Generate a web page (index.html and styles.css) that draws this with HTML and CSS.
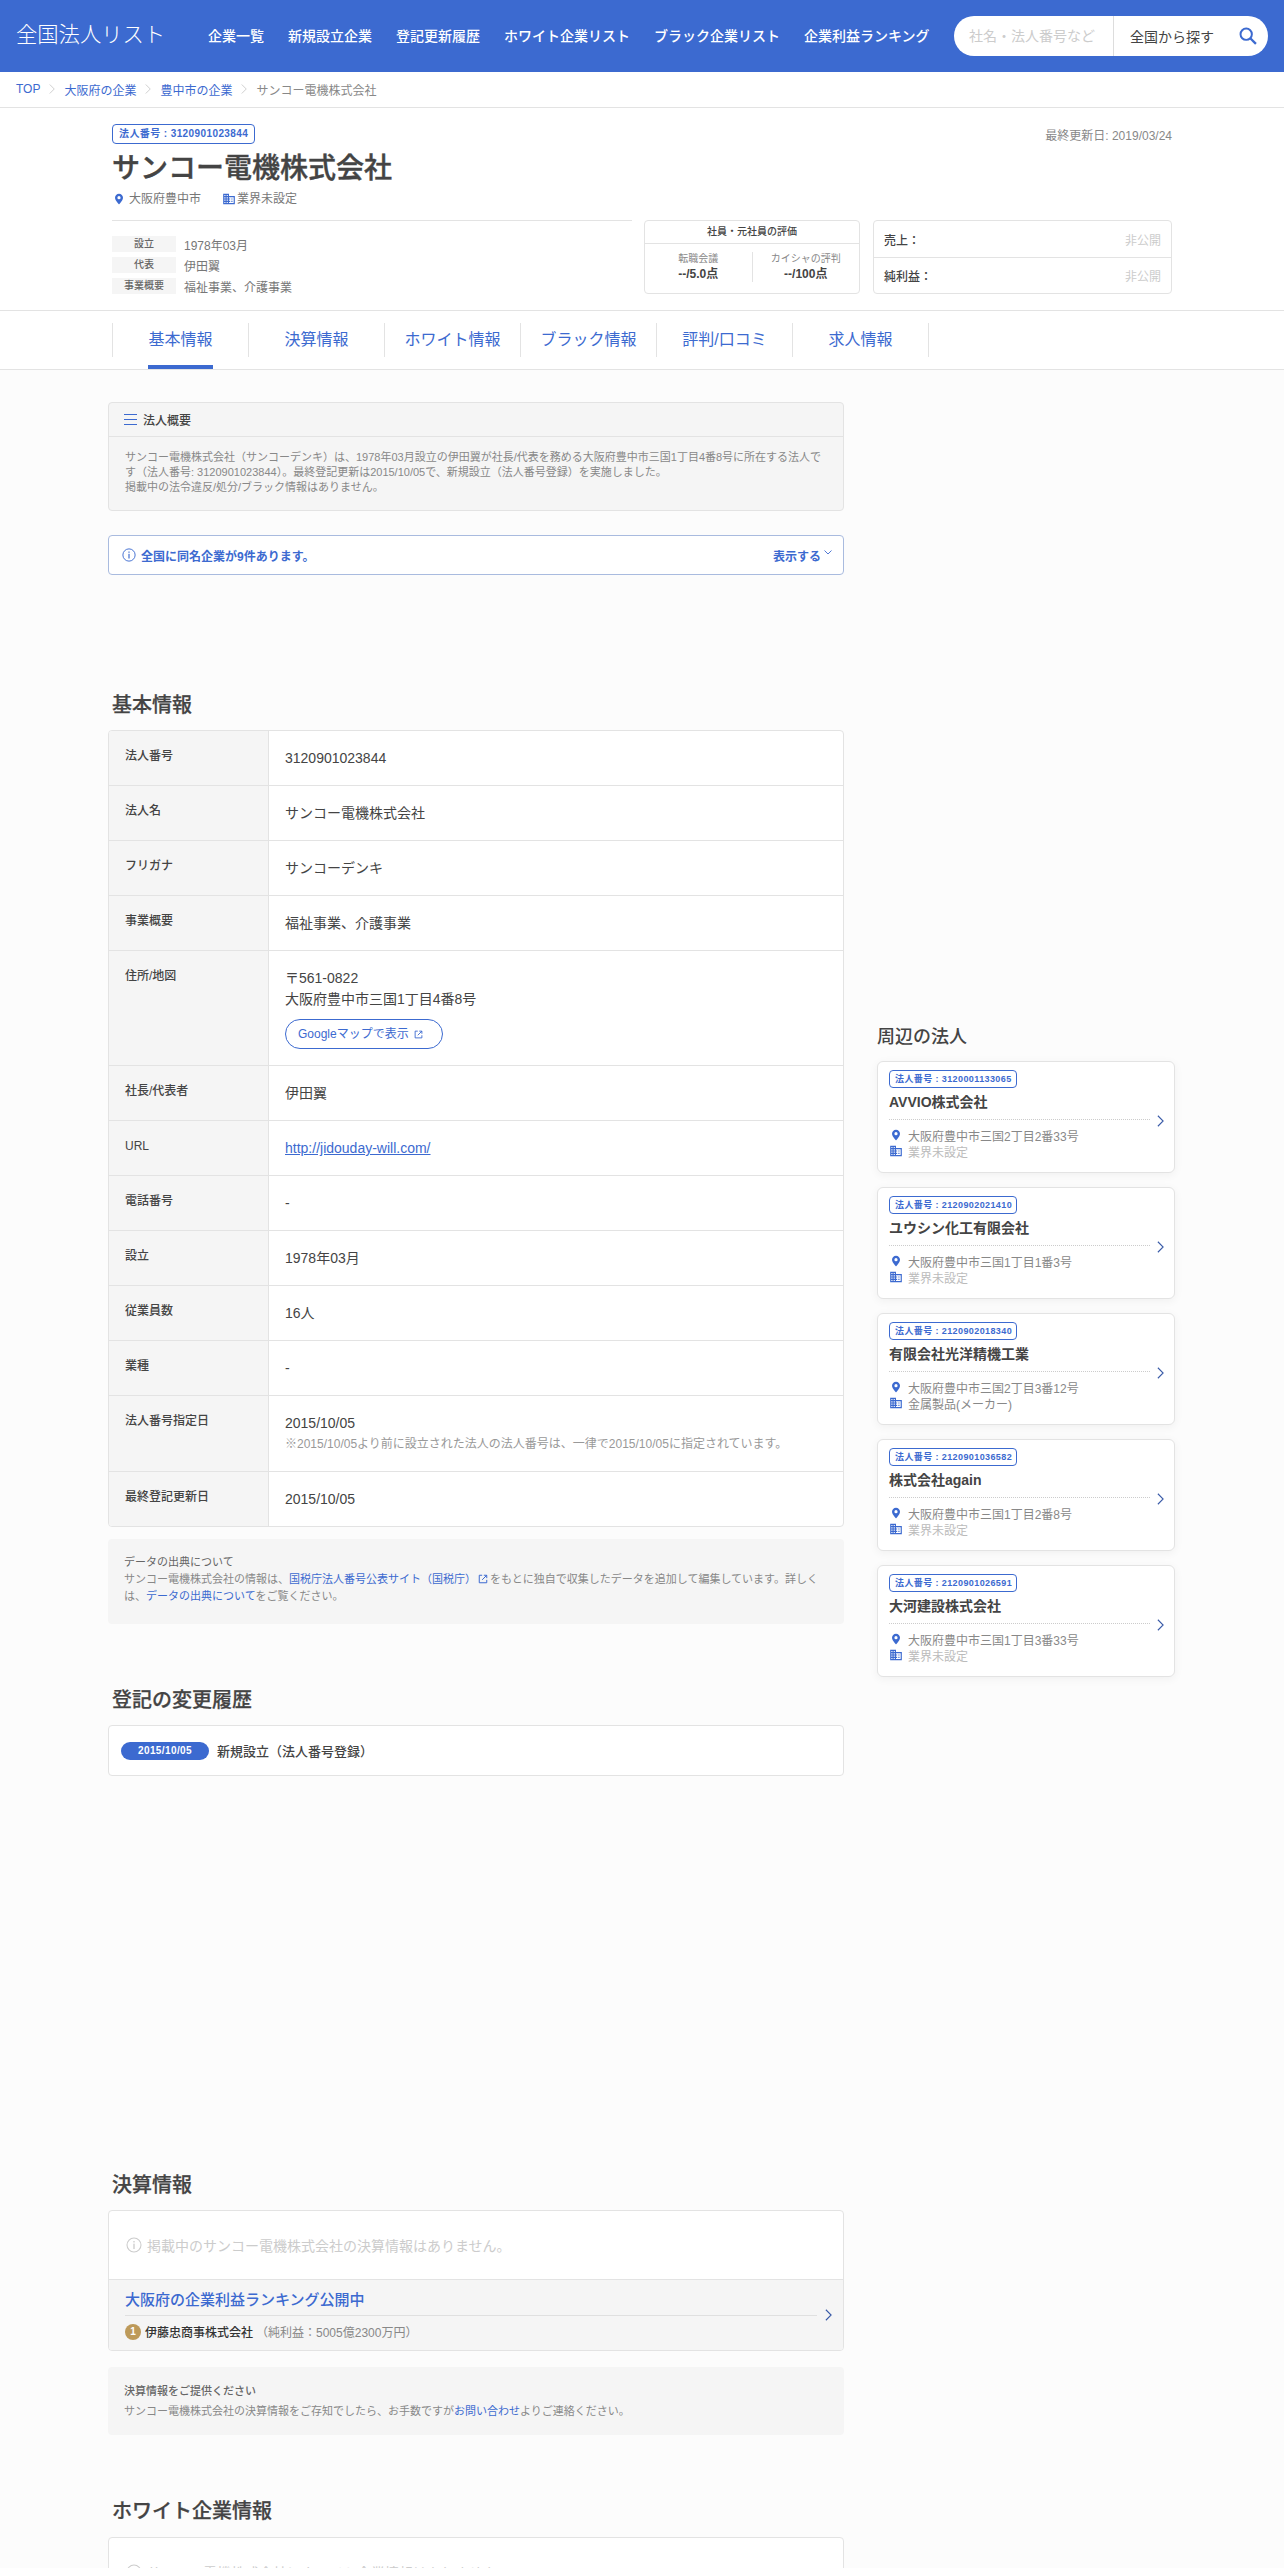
FILE: index.html
```html
<!DOCTYPE html>
<html lang="ja">
<head>
<meta charset="utf-8">
<title>サンコー電機株式会社 | 全国法人リスト</title>
<link rel="stylesheet" href="styles.css">
</head>
<body>
<svg class="sprite" aria-hidden="true">
  <symbol id="i-pin" viewBox="0 0 24 24"><path fill-rule="evenodd" d="M12 1.5c-4.4 0-8 3.5-8 7.9C4 15.200 12 22.500 12 22.500s8-7.300 8-13.100c0-4.400-3.600-7.900-8-7.900zm0 11a3.200 3.200 0 1 1 0-6.400 3.200 3.200 0 0 1 0 6.400z"/></symbol>
  <symbol id="i-building" viewBox="0 0 24 24"><path d="M12 7V3H2v18h20V7H12zM6 19H4v-2h2v2zm0-4H4v-2h2v2zm0-4H4V9h2v2zm0-4H4V5h2v2zm4 12H8v-2h2v2zm0-4H8v-2h2v2zm0-4H8V9h2v2zm0-4H8V5h2v2zm10 12h-8v-2h2v-2h-2v-2h2v-2h-2V9h8v10zm-2-8h-2v2h2v-2zm0 4h-2v2h2v-2z"/></symbol>
  <symbol id="i-info" viewBox="0 0 24 24"><circle cx="12" cy="12" r="10.500" fill="none" stroke="currentColor" stroke-width="1.600"/><rect x="11" y="10" width="2" height="8" fill="currentColor"/><rect x="11" y="6" width="2" height="2.200" fill="currentColor"/></symbol>
  <symbol id="i-ext" viewBox="0 0 24 24"><path fill="none" stroke="currentColor" stroke-width="2.400" d="M10 3H3v18h18v-7M14 3h7v7M21 3 10 14"/></symbol>
  <symbol id="i-chev" viewBox="0 0 8 14"><path fill="none" stroke="currentColor" stroke-width="1.250" d="m1 1 6 6-6 6"/></symbol>
</svg>
<div class="page">
<header class="site-header">
  <a class="logo">全国法人リスト</a>
  <nav class="global-nav">
    <a>企業一覧</a><a>新規設立企業</a><a>登記更新履歴</a><a>ホワイト企業リスト</a><a>ブラック企業リスト</a><a>企業利益ランキング</a>
  </nav>
  <form class="search">
    <span class="search-input">社名・法人番号など</span>
    <span class="search-area">全国から探す</span>
    <svg class="search-icon" viewBox="0 0 20 20"><circle cx="8" cy="8" r="6.300" fill="none" stroke="currentColor" stroke-width="2.200"/><path d="m12.800 12.800 6 6" stroke="currentColor" stroke-width="2.600" fill="none"/></svg>
  </form>
</header>

<nav class="crumbs">
  <a>TOP</a><svg class="crumb-sep"><use href="#i-chev"/></svg>
  <a>大阪府の企業</a><svg class="crumb-sep"><use href="#i-chev"/></svg>
  <a>豊中市の企業</a><svg class="crumb-sep"><use href="#i-chev"/></svg>
  <span>サンコー電機株式会社</span>
</nav>

<section class="company">
  <div class="company-top">
    <span class="badge">法人番号 : 3120901023844</span>
    <span class="updated">最終更新日: 2019/03/24</span>
  </div>
  <h1 class="company-name">サンコー電機株式会社</h1>
  <div class="company-meta">
    <span class="meta-item"><svg class="icon-pin"><use href="#i-pin"/></svg>大阪府豊中市</span>
    <span class="meta-item"><svg class="icon-bld"><use href="#i-building"/></svg>業界未設定</span>
  </div>
  <div class="summary">
    <dl class="facts">
      <div class="fact"><dt>設立</dt><dd>1978年03月</dd></div>
      <div class="fact"><dt>代表</dt><dd>伊田翼</dd></div>
      <div class="fact"><dt>事業概要</dt><dd>福祉事業、介護事業</dd></div>
    </dl>
    <div class="rating">
      <div class="rating-head">社員・元社員の評価</div>
      <div class="rating-cols">
        <div class="rating-col"><span class="rating-label">転職会議</span><strong>--/5.0点</strong></div>
        <div class="rating-col"><span class="rating-label">カイシャの評判</span><strong>--/100点</strong></div>
      </div>
    </div>
    <div class="finance">
      <div class="finance-row"><b>売上：</b><span>非公開</span></div>
      <div class="finance-row"><b>純利益：</b><span>非公開</span></div>
    </div>
  </div>
</section>

<nav class="tabs">
  <a class="tab is-active"><span>基本情報</span></a>
  <a class="tab"><span>決算情報</span></a>
  <a class="tab"><span>ホワイト情報</span></a>
  <a class="tab"><span>ブラック情報</span></a>
  <a class="tab"><span>評判/口コミ</span></a>
  <a class="tab"><span>求人情報</span></a>
</nav>

<div class="layout">
  <main class="main">
    <section class="overview">
      <h2 class="overview-head"><svg class="icon-lines" viewBox="0 0 13 11"><path d="M0 .5h13M0 5.500h13M0 10.500h13" stroke="currentColor" fill="none"/></svg>法人概要</h2>
      <p class="overview-body">サンコー電機株式会社（サンコーデンキ）は、1978年03月設立の伊田翼が社長/代表を務める大阪府豊中市三国1丁目4番8号に所在する法人です（法人番号: 3120901023844）。最終登記更新は2015/10/05で、新規設立（法人番号登録）を実施しました。<br>掲載中の法令違反/処分/ブラック情報はありません。</p>
    </section>

    <div class="alert">
      <svg class="icon-info"><use href="#i-info"/></svg>
      <b>全国に同名企業が9件あります。</b>
      <a class="alert-more">表示する<svg class="icon-down" viewBox="0 0 8 5"><path d="m.5.500 3.500 3.500L7.500.500" fill="none" stroke="currentColor" stroke-width=".9"/></svg></a>
    </div>

    <h2 class="section-title title-basic">基本情報</h2>
    <div class="table">
      <div class="row"><div class="row-label">法人番号</div><div class="row-value">3120901023844</div></div>
      <div class="row"><div class="row-label">法人名</div><div class="row-value">サンコー電機株式会社</div></div>
      <div class="row"><div class="row-label">フリガナ</div><div class="row-value">サンコーデンキ</div></div>
      <div class="row"><div class="row-label">事業概要</div><div class="row-value">福祉事業、介護事業</div></div>
      <div class="row"><div class="row-label">住所/地図</div><div class="row-value">〒561-0822<br>大阪府豊中市三国1丁目4番8号<br><a class="map-btn">Googleマップで表示<svg class="icon-ext"><use href="#i-ext"/></svg></a></div></div>
      <div class="row"><div class="row-label">社長/代表者</div><div class="row-value">伊田翼</div></div>
      <div class="row"><div class="row-label">URL</div><div class="row-value"><a class="link-u">http://jidouday-will.com/</a></div></div>
      <div class="row"><div class="row-label">電話番号</div><div class="row-value">-</div></div>
      <div class="row"><div class="row-label">設立</div><div class="row-value">1978年03月</div></div>
      <div class="row"><div class="row-label">従業員数</div><div class="row-value">16人</div></div>
      <div class="row"><div class="row-label">業種</div><div class="row-value">-</div></div>
      <div class="row"><div class="row-label">法人番号指定日</div><div class="row-value">2015/10/05<div class="row-note">※2015/10/05より前に設立された法人の法人番号は、一律で2015/10/05に指定されています。</div></div></div>
      <div class="row"><div class="row-label">最終登記更新日</div><div class="row-value">2015/10/05</div></div>
    </div>

    <aside class="note note-source">
      <h3>データの出典について</h3>
      <p>サンコー電機株式会社の情報は、<a>国税庁法人番号公表サイト（国税庁）<svg class="icon-ext-s"><use href="#i-ext"/></svg></a>をもとに独自で収集したデータを追加して編集しています。詳しくは、<a>データの出典について</a>をご覧ください。</p>
    </aside>

    <h2 class="section-title title-history">登記の変更履歴</h2>
    <div class="history">
      <span class="pill">2015/10/05</span><b>新規設立（法人番号登録）</b>
    </div>

    <h2 class="section-title title-finance">決算情報</h2>
    <div class="panel">
      <p class="empty"><svg class="icon-empty"><use href="#i-info"/></svg>掲載中のサンコー電機株式会社の決算情報はありません。</p>
      <a class="ranking">
        <div class="ranking-body">
          <div class="ranking-title">大阪府の企業利益ランキング公開中</div>
          <div class="ranking-item"><span class="medal">1</span><b>伊藤忠商事株式会社</b><span class="ranking-value">（純利益：5005億2300万円）</span></div>
        </div>
        <svg class="chev-lg"><use href="#i-chev"/></svg>
      </a>
    </div>
    <aside class="note note-provide">
      <h3>決算情報をご提供ください</h3>
      <p>サンコー電機株式会社の決算情報をご存知でしたら、お手数ですが<a>お問い合わせ</a>よりご連絡ください。</p>
    </aside>

    <h2 class="section-title title-white">ホワイト企業情報</h2>
    <div class="panel">
      <p class="empty"><svg class="icon-empty"><use href="#i-info"/></svg>サンコー電機株式会社にホワイト企業情報はありません。</p>
    </div>
  </main>

  <aside class="side">
    <h2 class="side-title">周辺の法人</h2>
    <a class="near">
      <div class="near-body">
        <span class="badge badge-sm">法人番号 : 3120001133065</span>
        <div class="near-name">AVVIO株式会社</div>
        <div class="near-line"><svg class="near-pin"><use href="#i-pin"/></svg>大阪府豊中市三国2丁目2番33号</div>
        <div class="near-line is-muted"><svg class="near-bld"><use href="#i-building"/></svg>業界未設定</div>
      </div>
      <svg class="chev-lg"><use href="#i-chev"/></svg>
    </a>
    <a class="near">
      <div class="near-body">
        <span class="badge badge-sm">法人番号 : 2120902021410</span>
        <div class="near-name">ユウシン化工有限会社</div>
        <div class="near-line"><svg class="near-pin"><use href="#i-pin"/></svg>大阪府豊中市三国1丁目1番3号</div>
        <div class="near-line is-muted"><svg class="near-bld"><use href="#i-building"/></svg>業界未設定</div>
      </div>
      <svg class="chev-lg"><use href="#i-chev"/></svg>
    </a>
    <a class="near">
      <div class="near-body">
        <span class="badge badge-sm">法人番号 : 2120902018340</span>
        <div class="near-name">有限会社光洋精機工業</div>
        <div class="near-line"><svg class="near-pin"><use href="#i-pin"/></svg>大阪府豊中市三国2丁目3番12号</div>
        <div class="near-line"><svg class="near-bld"><use href="#i-building"/></svg>金属製品(メーカー)</div>
      </div>
      <svg class="chev-lg"><use href="#i-chev"/></svg>
    </a>
    <a class="near">
      <div class="near-body">
        <span class="badge badge-sm">法人番号 : 2120901036582</span>
        <div class="near-name">株式会社again</div>
        <div class="near-line"><svg class="near-pin"><use href="#i-pin"/></svg>大阪府豊中市三国1丁目2番8号</div>
        <div class="near-line is-muted"><svg class="near-bld"><use href="#i-building"/></svg>業界未設定</div>
      </div>
      <svg class="chev-lg"><use href="#i-chev"/></svg>
    </a>
    <a class="near">
      <div class="near-body">
        <span class="badge badge-sm">法人番号 : 2120901026591</span>
        <div class="near-name">大河建設株式会社</div>
        <div class="near-line"><svg class="near-pin"><use href="#i-pin"/></svg>大阪府豊中市三国1丁目3番33号</div>
        <div class="near-line is-muted"><svg class="near-bld"><use href="#i-building"/></svg>業界未設定</div>
      </div>
      <svg class="chev-lg"><use href="#i-chev"/></svg>
    </a>
  </aside>
</div>
</div>
</body>
</html>
```

FILE: styles.css
```css
* { box-sizing: border-box; }
html, body { margin: 0; padding: 0; }
body {
  font-family: "Liberation Sans", "Noto Sans CJK JP", sans-serif;
  color: #444;
  background: #fcfcfc;
  font-size: 14px;
}
a { color: inherit; text-decoration: none; }
h1, h2, h3, p, dl, dd { margin: 0; }
svg { display: block; fill: currentColor; flex: none; }
.sprite { position: absolute; width: 0; height: 0; }
.page { height: 2568px; overflow: hidden; }

/* header */
.site-header {
  display: flex;
  align-items: center;
  height: 72px;
  padding: 0 16px;
  background: #3c6ad0;
  color: #fff;
}
.logo { width: 192px; font-size: 21.300px; font-weight: 300; line-height: 32px; white-space: nowrap; margin-top: -2px; }
.global-nav { display: flex; gap: 24px; font-size: 14px; font-weight: 500; margin-top: -2px; }
.search {
  display: flex;
  align-items: center;
  width: 314px;
  height: 40px;
  margin-left: auto;
  border-radius: 20px;
  background: #fff;
}
.search-input { width: 160px; padding-left: 15px; border-right: 1px solid #ddd; line-height: 40px; color: #ccc; white-space: nowrap; }
.search-area { padding-left: 16px; width: 125px; color: #444; white-space: nowrap; }
.search-icon { width: 18px; height: 18px; color: #3c6ad0; }

/* breadcrumbs */
.crumbs {
  display: flex;
  align-items: center;
  height: 36px;
  padding: 0 16px 1px;
  background: #fff;
  border-bottom: 1px solid #e3e3e3;
  font-size: 12px;
  color: #3c6ad0;
}
.crumbs span { color: #888; }
.crumb-sep { width: 6px; height: 12px; margin: 0 9px; color: #ccc; }

/* company head */
.company {
  padding: 16px 112px 16px;
  background: #fff;
  border-bottom: 1px solid #e3e3e3;
}
.company-top { display: flex; justify-content: space-between; align-items: center; }
.badge {
  display: inline-block;
  height: 20px;
  padding: 0 6px;
  border: 1px solid #3c6ad0;
  border-radius: 4px;
  background: #fff;
  color: #3c6ad0;
  font-size: 10px;
  font-weight: 700;
  letter-spacing: .4px;
  line-height: 18px;
  white-space: nowrap;
}
.updated { font-size: 12px; color: #888; }
.company-name { margin-top: 7px; font-size: 28px; line-height: 36px; font-weight: 500; -webkit-text-stroke: .4px #444; color: #444; }
.company-meta { display: flex; gap: 21px; margin-top: 4px; font-size: 12px; line-height: 16px; color: #777; }
.meta-item { display: flex; align-items: center; }
.icon-pin { width: 12px; height: 12px; margin-right: 4px; margin-left: 1px; color: #3c6ad0; }
.icon-bld { width: 14px; height: 14px; margin-right: 1px; color: #3c6ad0; }
.summary { display: flex; margin-top: 13px; }
.facts { width: 520px; margin-right: 12px; padding-top: 15px; border-top: 1px solid #e3e3e3; font-size: 12px; }
.fact { display: flex; align-items: center; height: 16px; margin-bottom: 5px; }
.fact:last-child { margin-bottom: 0; }
.fact dt { width: 64px; margin-right: 8px; background: #f5f5f5; font-size: 10px; font-weight: 500; line-height: 16px; text-align: center; color: #666; }
.fact dd { color: #777; }
.rating {
  width: 216px;
  height: 74px;
  margin-right: 13px;
  border: 1px solid #e3e3e3;
  border-radius: 4px;
  background: #fff;
}
.rating-head { height: 23px; border-bottom: 1px solid #e3e3e3; font-size: 10px; font-weight: 500; line-height: 21px; text-align: center; color: #444; }
.rating-cols { display: flex; padding-top: 8px; }
.rating-col { display: flex; flex-direction: column; flex: 1; align-items: center; height: 30px; }
.rating-col + .rating-col { border-left: 1px solid #e3e3e3; }
.rating-label { font-size: 10px; line-height: 14px; color: #888; }
.rating-col strong { font-size: 12px; line-height: 17px; color: #444; }
.finance { width: 299px; height: 74px; border: 1px solid #e3e3e3; border-radius: 4px; background: #fff; }
.finance-row { display: flex; justify-content: space-between; align-items: center; height: 36px; padding: 0 10px; font-size: 12px; }
.finance-row b { font-weight: 500; }
.finance-row + .finance-row { border-top: 1px solid #e3e3e3; }
.finance-row span { color: #ccc; }

/* tabs */
.tabs {
  display: flex;
  padding: 12px 112px;
  background: #fff;
  border-bottom: 1px solid #e3e3e3;
}
.tab {
  width: 136px;
  height: 34px;
  border-left: 1px solid #e3e3e3;
  font-size: 16px;
  line-height: 34px;
  text-align: center;
  color: #3c6ad0;
}
.tab:last-child { width: 137px; border-right: 1px solid #e3e3e3; }
.tab span { position: relative; display: inline-block; }
.is-active span::after {
  content: "";
  position: absolute;
  left: 0;
  right: 0;
  top: 42px;
  height: 4px;
  background: #3c6ad0;
}

/* layout */
.layout { display: flex; gap: 33px; padding: 32px 0 0 108px; }
.main { width: 736px; flex: none; }
.side { width: 298px; flex: none; padding-top: 622px; }

.overview { border: 1px solid #e3e3e3; border-radius: 4px; background: #f5f5f5; }
.overview-head {
  display: flex;
  align-items: center;
  height: 34px;
  padding-left: 15px;
  border-bottom: 1px solid #e3e3e3;
  font-size: 12px;
  font-weight: 500;
  color: #444;
}
.icon-lines { width: 13px; height: 11px; margin-right: 6px; color: #3c6ad0; }
.overview-body { padding: 13px 16px 15px; font-size: 11px; line-height: 15px; color: #888; }

.alert {
  display: flex;
  align-items: center;
  height: 40px;
  margin-top: 24px;
  padding: 0 11px 0 13px;
  border: 1px solid #a9bbdf;
  border-radius: 4px;
  background: #fff;
  font-size: 12px;
  color: #3c6ad0;
}
.icon-info { width: 14px; height: 14px; margin-right: 5px; }
.alert-more { display: flex; margin-left: auto; font-weight: 700; }
.icon-down { width: 8px; height: 5px; margin: 3px 0 0 3px; }

.section-title { font-size: 20px; line-height: 30px; font-weight: 500; -webkit-text-stroke: .25px #444; padding-left: 4px; margin-bottom: 10px; color: #444; }
.title-basic { margin-top: 115px; }
.title-history { margin-top: 61px; }
.title-finance { margin-top: 394px; }
.title-white { margin-top: 61px; margin-bottom: 11px; }

.table { border: 1px solid #e3e3e3; border-radius: 4px; background: #fff; overflow: hidden; }
.row { display: flex; border-bottom: 1px solid #e3e3e3; }
.row:last-child { border-bottom: 0; }
.row-label {
  width: 160px;
  flex: none;
  padding: 16px;
  border-right: 1px solid #e3e3e3;
  background: #f5f5f5;
  font-size: 12px;
  font-weight: 500;
  line-height: 18px;
  color: #444;
}
.row-value { flex: 1; padding: 17px 16px 16px; font-size: 14px; line-height: 21px; color: #444; }
.row-note { font-size: 12px; color: #999; }
.map-btn {
  display: flex;
  align-items: center;
  width: 158px;
  height: 30px;
  margin-top: 9px;
  padding-left: 12px;
  border: 1px solid #3c6ad0;
  border-radius: 15px;
  font-size: 12px;
  color: #3c6ad0;
}
.icon-ext { width: 9px; height: 9px; margin-left: 5px; }
.link-u { color: #3c6ad0; text-decoration: underline; }

.note { border-radius: 4px; background: #f5f5f5; font-size: 11px; color: #888; }
.note h3 { font-size: 11px; font-weight: 400; color: #666; }
.note a { color: #3c6ad0; }
.note-source { height: 85px; margin-top: 12px; padding: 14px 16px; line-height: 17px; }
.note-source h3 { line-height: 18px; }
.icon-ext-s { display: inline-block; width: 10px; height: 10px; margin: 0 2px; vertical-align: -1px; }
.note-provide { height: 68px; margin-top: 16px; padding: 14px 16px; line-height: 20px; }
.note-provide h3 { font-weight: 500; }

.history {
  display: flex;
  align-items: center;
  height: 51px;
  padding-left: 12px;
  border: 1px solid #e3e3e3;
  border-radius: 4px;
  background: #fff;
  font-size: 13px;
}
.history b { font-weight: 500; }
.pill {
  width: 88px;
  height: 18px;
  margin-right: 8px;
  border-radius: 9px;
  background: #3c6ad0;
  color: #fff;
  font-size: 10px;
  font-weight: 700;
  letter-spacing: .4px;
  line-height: 18px;
  text-align: center;
}

.panel { border: 1px solid #e3e3e3; border-radius: 4px; background: #fff; overflow: hidden; }
.empty { display: flex; align-items: center; height: 68px; padding-left: 17px; font-size: 14px; color: #ccc; }
.icon-empty { width: 16px; height: 16px; margin-right: 5px; }
.ranking { display: flex; align-items: center; height: 71px; padding: 0 11px 0 16px; border-top: 1px solid #e3e3e3; background: #f5f5f5; }
.ranking-body { flex: 1; margin-right: 8px; }
.ranking-title { height: 26px; font-size: 15px; font-weight: 500; line-height: 20px; color: #3c6ad0; border-bottom: 1px solid #e0e0e0; margin-bottom: 7px; }
.ranking-item { display: flex; align-items: center; font-size: 12px; color: #333; }
.ranking-item b { font-weight: 500; }
.medal { width: 16px; height: 16px; margin-right: 4px; border-radius: 50%; background: #bd9a5a; color: #fff; font-size: 10px; font-weight: 700; line-height: 16px; text-align: center; }
.ranking-value { color: #888; margin-left: 3px; }
.chev-lg { width: 7px; height: 14px; color: #3a5ba8; }

/* sidebar */
.side-title { font-size: 18px; line-height: 27px; font-weight: 500; margin-bottom: 10px; color: #444; }
.near {
  display: flex;
  align-items: center;
  height: 112px;
  margin-bottom: 14px;
  padding: 8px 10px 0 11px;
  border: 1px solid #e3e3e3;
  border-radius: 6px;
  background: #fff;
  box-shadow: 0 2px 10px rgba(0, 0, 0, .05);
}
.near-body { flex: 1; align-self: flex-start; margin-right: 7px; }
.badge-sm { display: block; width: 128px; height: 18px; padding: 0 5px; font-size: 9px; line-height: 16px; }
.near-name { margin-top: 4px; padding-bottom: 6px; border-bottom: 1px dotted #ccc; margin-bottom: 7px; font-size: 14px; font-weight: 700; line-height: 21px; color: #444; }
.near-line { display: flex; align-items: center; height: 16px; font-size: 12px; color: #888; }
.near-line.is-muted { color: #bbb; }
.near-pin { width: 12px; height: 12px; margin: 0 6px 0 1px; color: #3c6ad0; }
.near-bld { width: 14px; height: 14px; margin-right: 5px; color: #3c6ad0; }
```
